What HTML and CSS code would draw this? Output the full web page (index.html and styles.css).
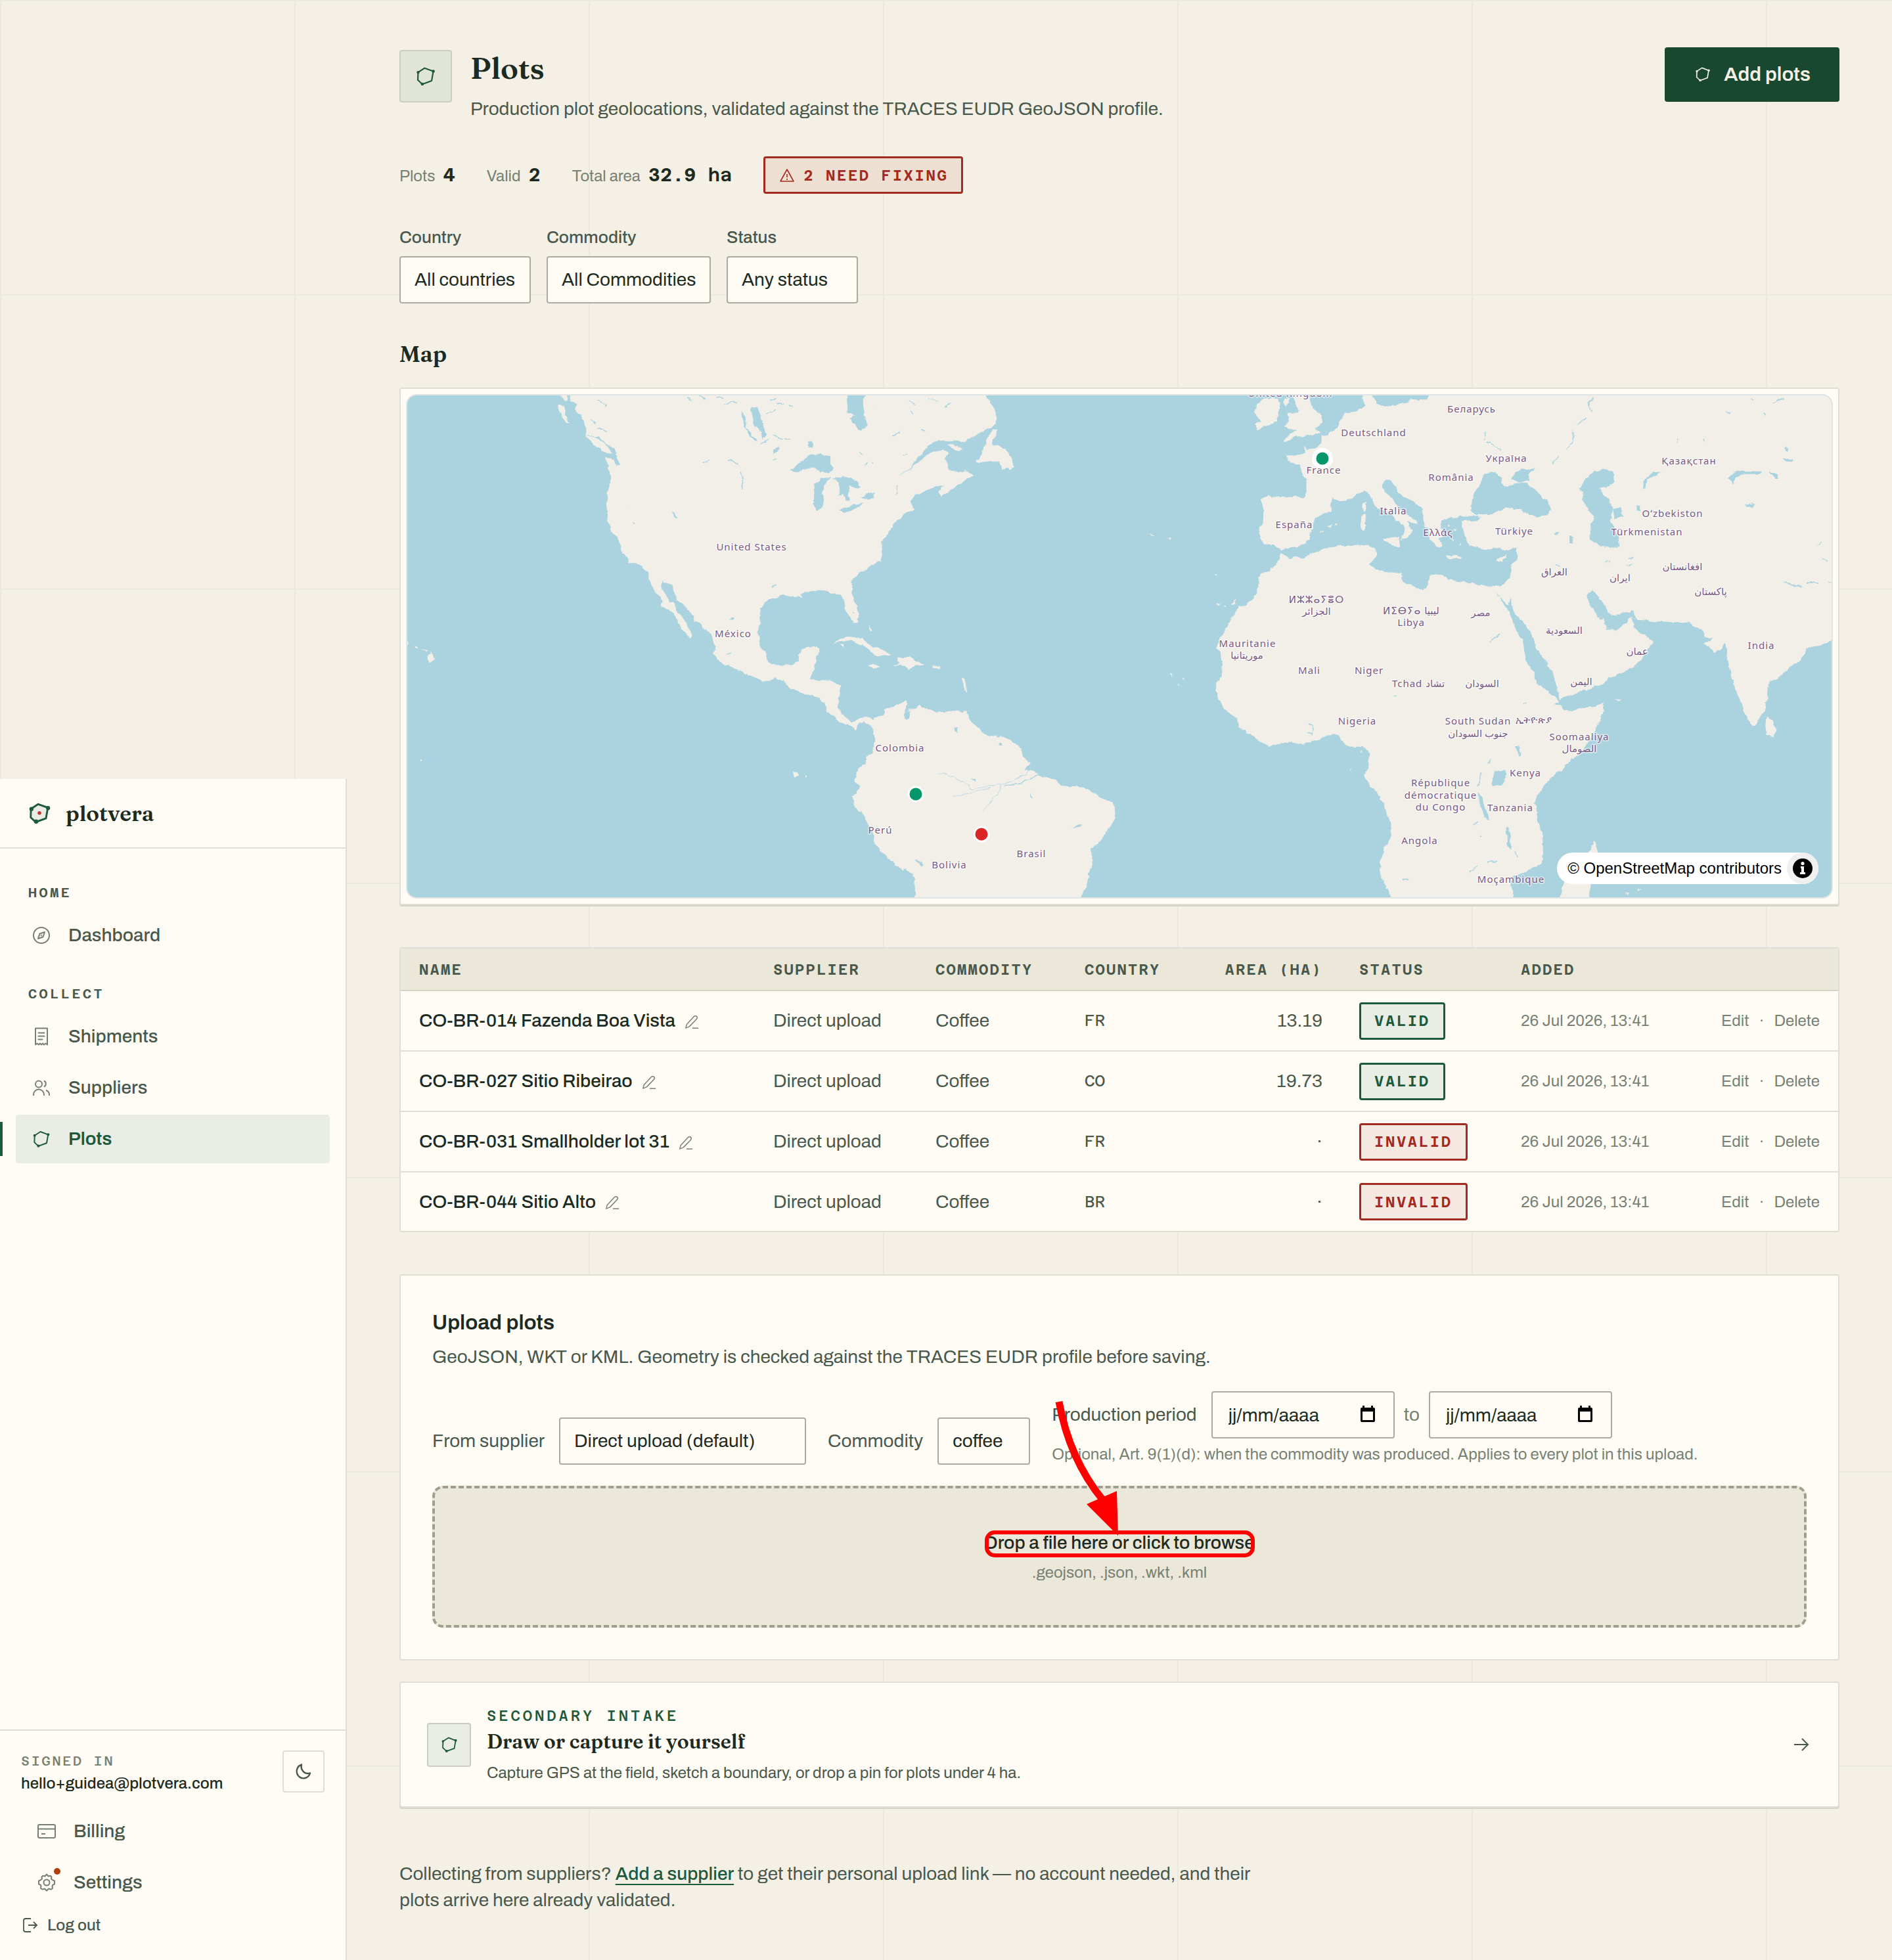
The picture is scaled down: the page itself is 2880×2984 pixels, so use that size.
FILE: index.html
```html
<!DOCTYPE html>
<html lang="en">
<head>
<meta charset="utf-8">
<title>Plots – plotvera</title>
<link rel="stylesheet" href="styles.css">
</head>
<body>
<svg class="sprite" aria-hidden="true">
  <symbol id="i-plot" viewBox="0 0 28 28">
    <path d="M12.7 4.4 23 8.2 21 19.5 10 23.5 4.7 18.5 5 9.4Z" fill="none" stroke="currentColor" stroke-width="1.7" stroke-linejoin="round"/>
    <g fill="currentColor"><circle cx="23" cy="8.2" r="1.8"/><circle cx="10" cy="23.3" r="1.8"/><circle cx="5" cy="9.4" r="1.7"/></g>
  </symbol>
  <symbol id="i-pencil" viewBox="0 0 24 24">
    <path d="M2 22 3.500 16 15.500 3C17 1.500 19.500 1.500 20.500 3S21 6 20 7L8 19.500 2 22ZM13 22h10" fill="none" stroke="currentColor" stroke-width="1.600" stroke-linejoin="round"/>
  </symbol>
  <symbol id="i-calendar" viewBox="0 0 24 26">
    <path d="M4 0h3v3h10V0h3v3h1a2 2 0 0 1 2 2v18a2 2 0 0 1-2 2H3a2 2 0 0 1-2-2V5a2 2 0 0 1 2-2h1ZM4 9v13h16V9Z" fill="#000" fill-rule="evenodd"/>
  </symbol>
</svg>

<div class="layout">
  <aside class="sidebar">
    <a class="brand" href="#">
      <svg class="brand-mark" viewBox="0 0 28 28" aria-hidden="true">
        <path d="M12.700 4.400 23 8.200 21 19.500 10 23.500 4.700 18.500 5 9.400Z" fill="#e8ece4" stroke="#1d5a3c" stroke-width="2" stroke-linejoin="round"/>
        <g fill="#1d5a3c"><circle cx="23.200" cy="8.500" r="2.200"/><circle cx="10.500" cy="23" r="2.300"/><circle cx="5.500" cy="9.600" r="2.200"/></g>
        <circle cx="14" cy="13.800" r="1.900" fill="#c0392b"/>
      </svg>
      <span>plotvera</span>
    </a>
    <nav class="nav" aria-label="Main">
      <h2 class="nav-title">HOME</h2>
      <a class="nav-link" href="#">
        <svg class="icon-nav" viewBox="0 0 32 32" aria-hidden="true"><g fill="none" stroke="currentColor" stroke-width="2" stroke-linejoin="round"><circle cx="16" cy="16" r="12"/><path d="M21 11 18.500 18.500 11 21 13.500 13.500Z"/><circle cx="16" cy="16" r="1" stroke-width="1"/></g></svg>
        Dashboard
      </a>
      <h2 class="nav-title">COLLECT</h2>
      <a class="nav-link" href="#">
        <svg class="icon-nav" viewBox="0 0 32 32" aria-hidden="true"><path d="M7 3.500h18v25l-2.500-2-2.500 2-2-2-2 2-2-2-2 2-2.500-2L7 28.500ZM11.500 10.500h9M11.500 15.500h9M11.500 20.500h6" fill="none" stroke="currentColor" stroke-width="2" stroke-linejoin="round" stroke-linecap="round"/></svg>
        Shipments
      </a>
      <a class="nav-link" href="#">
        <svg class="icon-nav" viewBox="0 0 32 32" aria-hidden="true"><path d="M4 28v-1.500a8 8 0 0 1 16 0V28M20 5.500a5 5 0 0 1 0 9M23 20a7 7 0 0 1 5 6.500V28M17 10.500a5 5 0 1 1-10 0 5 5 0 0 1 10 0Z" fill="none" stroke="currentColor" stroke-width="2"/></svg>
        Suppliers
      </a>
      <a class="nav-link is-active" href="#" aria-current="page">
        <svg class="icon-nav" aria-hidden="true"><use href="#i-plot"/></svg>
        Plots
      </a>
    </nav>
    <div class="account">
      <div class="account-user">
        <div>
          <div class="account-label">SIGNED IN</div>
          <div class="account-email">hello+guidea@plotvera.com</div>
        </div>
        <button class="theme-button" type="button" aria-label="Switch theme">
          <svg class="icon-s" viewBox="0 0 28 28" aria-hidden="true"><path d="M11 3.500C5.500 5.500 2.500 11 4 16.500c1.500 5.500 7 9 12.500 7.500 4-1 6.500-4 7.500-7.500-8 2.500-15-4.500-13-13Z" fill="none" stroke="currentColor" stroke-width="2.400" stroke-linejoin="round"/></svg>
        </button>
      </div>
      <a class="nav-link" href="#">
        <svg class="icon-nav" viewBox="0 0 32 32" aria-hidden="true"><path d="M5 6h22a2 2 0 0 1 2 2v16a2 2 0 0 1-2 2H5a2 2 0 0 1-2-2V8a2 2 0 0 1 2-2ZM3 12.500h26M8 20h6" fill="none" stroke="currentColor" stroke-width="2"/></svg>
        Billing
      </a>
      <a class="nav-link" href="#">
        <span class="icon-wrap">
          <svg class="icon-nav" viewBox="0 0 32 32" aria-hidden="true"><g fill="none" stroke="currentColor" stroke-width="2" stroke-linejoin="round"><path d="M16 3.500 18.500 6.500 22 5.800 23.500 7.500 23 10.500 25.500 12.500 28 13.500V18.500L25.500 19.500 24.500 21.500 25 25 22.500 26.500 19 25.500 16 28.500 13 25.500 9.500 26.500 7 25 7.500 21.500 6.500 19.500 4 18.500V13.500L6.500 12.500 9 10.500 8.500 7.500 10 5.800 13.500 6.500Z"/><circle cx="16" cy="16" r="4.500"/></g></svg>
          <span class="alert-dot"></span>
        </span>
        Settings
      </a>
      <button class="logout" type="button">
        <svg class="icon-s" viewBox="0 0 28 28" aria-hidden="true"><path d="M15 4H7a3 3 0 0 0-3 3v14a3 3 0 0 0 3 3h8M11 14h13M19 9l5 5-5 5" fill="none" stroke="currentColor" stroke-width="1.800"/></svg>
        Log out
      </button>
    </div>
  </aside>

  <main class="main">
    <header class="page-head">
      <span class="tile tile-l"><svg class="icon-l" aria-hidden="true"><use href="#i-plot"/></svg></span>
      <div class="page-title">
        <h1>Plots</h1>
        <p>Production plot geolocations, validated against the TRACES EUDR GeoJSON profile.</p>
      </div>
      <button class="primary" type="button"><svg class="icon-s" aria-hidden="true"><use href="#i-plot"/></svg>Add plots</button>
    </header>

    <div class="stats">
      <span class="stat">Plots <b>4</b></span>
      <span class="stat">Valid <b>2</b></span>
      <span class="stat">Total area <b>32.9 ha</b></span>
      <span class="badge badge-bad badge-wide"><svg class="icon-warn" viewBox="0 0 26 26" aria-hidden="true"><path d="M13 4 23 22H3ZM13 11v5M13 18v2" fill="none" stroke="currentColor" stroke-width="1.600" stroke-linejoin="round"/></svg>2 NEED FIXING</span>
    </div>

    <form class="filters">
      <label class="filter">Country<select class="control w-m"><option>All countries</option></select></label>
      <label class="filter">Commodity<select class="control w-l"><option>All Commodities</option></select></label>
      <label class="filter">Status<select class="control w-m"><option>Any status</option></select></label>
    </form>

    <h2 class="section-title">Map</h2>
    <div class="map-card">
      <div class="map">
        <svg class="map-canvas" viewBox="620 602 2168 764" role="img" aria-label="World map of plots">
          <defs>
            <filter id="coast" x="0" y="0" width="100%" height="100%"><feTurbulence type="fractalNoise" baseFrequency="0.09" numOctaves="3" seed="4"/><feDisplacementMap in="SourceGraphic" scale="7" xChannelSelector="R" yChannelSelector="G"/></filter>
          </defs>
          <rect x="600" y="590" width="2200" height="790" fill="#aad3df"/>
          <g filter="url(#coast)">
            <rect x="600" y="580" width="2220" height="800" fill="none"/>
            <!-- the Americas, west part -->
            <g transform="translate(600 580) scale(.4847 .5102)" fill="#f2efe9">
              <path d="M555 20 552 60 575 70 565 85 585 105 597 125 605 150 600 160 640 165 660 180 690 205 703 225 705 250 695 255 690 235 662 230 672 250 677 275 677 300 673 330 667 360 672 390 669 418 680 430 682 450 700 468 712 490 715 508 730 525 737 543 765 550 790 565 798 580 808 605 825 635 845 655 838 672 860 680 880 695 890 720 905 740 928 766 936 758 925 740 915 720 905 705 888 688 878 665 862 652 850 635 838 615 840 600 868 605 880 635 885 652 910 670 938 700 940 712 960 725 985 748 1000 765 1003 785 1010 800 1005 815 1020 835 1040 850 1070 857 1100 873 1140 888 1166 896 1200 886 1220 895 1250 922 1290 935 1325 941 1345 955 1360 975 1358 992 1385 1000 1397 1018 1425 1025 1452 1042 1458 1025 1475 1015 1490 1025 1505 1045 1508 1085 1500 1110 1480 1125 1478 1145 1458 1155 1445 1190 1462 1212 1440 1240 1445 1268 1465 1285 1485 1315 1500 1350 1525 1380 1530 1400 1568 1440 1600 1460V965L1568 975 1545 985 1538 1000 1518 1027 1500 1010 1478 1003 1440 1018 1415 1005 1393 975 1397 940 1402 908 1375 893 1330 893 1305 892 1320 860 1325 825 1338 800 1325 793 1285 797 1272 815 1270 835 1250 845 1205 852 1175 838 1165 812 1148 785 1143 745 1150 705 1150 680 1165 660 1195 648 1215 640 1250 640 1285 648 1275 635 1320 625 1350 625 1380 635 1400 638 1412 655 1415 680 1430 705 1442 722 1455 722 1459 700 1450 665 1437 635 1435 600 1460 575 1500 550 1530 535 1532 510 1530 480 1545 460 1568 430 1600 400V20Z"/>
              <path d="M514 72 532 74 540 100 551 128 535 115 520 95ZM512 30h30l5 25-12 5-8-12ZM600 162 635 168 660 185 685 215 660 212 625 190ZM1378 785 1395 768 1430 762 1470 772 1510 795 1562 815 1510 820 1490 800 1440 775 1400 775ZM1488 850 1510 846 1528 854 1510 860ZM1490 725 1503 748 1495 748ZM105 820 113 812 126 828 110 840ZM66 788l9 4-4 6ZM85 800l20 4-4 5ZM38 776l9 5-6 5ZM78 1130l8 3-3 5ZM1252 1163l14 6 6 12-16 4ZM1288 1176l8 3-5 4ZM1405 786l10 2-5 8Z"/>
              <g fill="#aad3df">
                <path d="M1245 268 1280 240 1305 220 1335 215 1365 228 1380 262 1375 272 1340 275 1320 258 1295 258 1270 270ZM1320 310 1340 290 1370 288 1352 305 1345 330 1350 360 1340 385 1325 388 1318 360ZM1375 290 1410 282 1440 290 1465 315 1450 320 1430 310 1425 335 1430 355 1418 357 1408 335 1392 345 1400 320 1390 295ZM1398 383 1440 370 1478 362 1450 380 1415 394ZM1465 350 1490 335 1527 328 1527 345 1490 350ZM1120 80 1140 75 1150 110 1168 160 1160 175 1150 150 1130 130ZM1088 88 1105 110 1108 140 1138 180 1128 178 1100 135ZM1420 20H1490L1470 60 1485 130 1465 150 1440 125 1425 95ZM1300 180l14 0 0 18-12 0ZM872 390l8 2 8 18-6 0ZM1188 205l20-10 4 10-20 12ZM1505 80l35-10 18 10-25 15Z"/>
                <path d="M920 48l14 12M960 45l18 10M1010 48l20 4M1040 70l20-8M1060 60l18 6M1180 60l20-10M1170 100l30-15M1200 65l25 4M1240 70l12 6M1150 190l25-15M1190 160l30 15M1225 172l20 5M1050 235l28 14M965 246l25-8M1090 270l8 40-6 12M738 380l4 2M748 420l6 4M1190 236l12-4M1460 215l12 4M1475 250l10-4M1500 245l10 4M1545 222l18 2M1520 120l30-8M640 55l25 22M620 115l14 12M640 140l25 10M1185 618l20-10M1053 711l14 0M1042 815l14 0M1440 690l6 2M1520 460l10 6 2 24" fill="none" stroke="#aad3df" stroke-width="3"/>
              </g>
              <path d="M1423 100l14-6 8 8-10 8Z"/>
            </g>
            <!-- the Americas, east part; western Europe and Africa -->
            <g transform="translate(1340 580) scale(.4847 .5102)" fill="#f2efe9">
              <path d="M-20 20H320L365 90 365 130 320 150 265 180 215 180 165 180 140 205 105 245 95 262 130 235 160 212 195 205 215 215 205 235 215 265 245 275 275 265 290 285 262 300 225 320 190 345 180 330 200 312 165 320 110 340 95 360 108 385 60 402 40 415 20 450 15 465 5 475 5 520-20 525ZM355 143 370 145 350 190 375 195 405 215 415 240 420 255 410 268 400 260 380 265 375 240 345 240 302 243 325 205 340 165ZM208 188 240 193 260 207 240 207ZM35 850 60 845 52 825 95 825 138 847 110 850 88 860 75 850ZM162 848H188V857H162ZM-10 798 35 817-10 820Z"/>
              <path d="M-20 1005 10 1000 15 980 45 970 80 955 88 965 75 985 90 985 105 975 125 970 160 985 200 990 240 985 270 990 275 1010 310 1035 325 1055 380 1063 410 1072 440 1095 450 1120 470 1140 455 1160 480 1165 500 1175 550 1190 570 1210 640 1213 680 1235 705 1250 727 1255 738 1285 735 1310 715 1345 680 1385 665 1390 665 1430 655 1470 650 1495 635 1530 620 1560H110L108 1490 100 1470 60 1445 20 1420 0 1400-20 1375Z"/>
              <path d="M262 985h10v8h-10ZM254 880l10 10 8 30-2 10-8-20ZM845 455l18 2-8 4ZM898 470l14 2-2 4ZM1050 576l9 1-4 4ZM1038 656l6 6M1056 662l12 4-6 6ZM1078 668l8 4-6 4ZM1104 664l14-16-6 22ZM908 872l6 4-4 2ZM935 905l6-2 0 8ZM948 886l6 4-4 2ZM1472 1158l6 2-4 6ZM1510 1102l8 2-5 8Z"/>
              <path d="M1180 70 1200 55 1245 50 1258 65 1250 90 1248 120 1215 135 1185 145 1175 130 1195 118 1178 100ZM1270 50 1285 55 1275 78 1265 65ZM1290 20 1350 50 1360 85 1388 105 1388 125 1365 140 1383 155 1340 165 1300 168 1262 183 1285 160 1310 150 1268 135 1285 120 1280 100 1315 92 1305 65Z"/>
              <path d="M1575 20H1515V50L1520 75 1500 90 1460 95 1445 115 1435 140 1400 160 1385 165 1388 185 1370 200 1340 205 1328 195 1335 215 1275 225 1280 235 1320 250 1325 275 1338 290 1338 330 1330 348 1220 343 1195 352 1203 380 1203 410 1190 455 1203 487 1235 488 1258 508 1275 497 1310 495 1345 475 1350 455 1360 440 1358 430 1365 410 1415 385 1418 350 1465 358 1500 335 1520 325 1545 345 1575 382Z"/>
              <path d="M1258 515 1285 527 1330 528 1380 505 1440 492 1490 492 1535 487 1555 495 1550 520 1558 545 1540 550 1575 572V1248L1540 1210 1518 1180 1533 1155 1535 1110 1515 1088 1465 1092 1440 1058 1410 1057 1370 1070 1325 1085 1285 1077 1220 1090 1185 1070 1130 1035 1120 1010 1080 975 1060 945 1052 912 1070 880 1073 840 1068 810 1055 795 1075 755 1100 715 1125 675 1160 660 1185 630 1185 605 1195 575 1235 558 1250 535ZM1508 402 1530 398 1532 440 1512 447ZM1515 365 1528 358 1527 392 1516 390ZM1403 433 1420 430 1412 440ZM1428 426h8v4h-8ZM1382 448h8v4h-8Z"/>
              <path d="M78 985 92 985 93 1005 82 1010 74 998ZM232 1034 244 1034 240 1048 234 1046ZM470 1228 482 1245 474 1244ZM284 1186 300 1190 298 1198ZM112 1425 134 1442 130 1448 114 1436ZM600 1336 630 1322 628 1330ZM373 1080h8v8h-8Z" fill="#aad3df"/>
              <path d="M40 165l20-14M70 220l12-4M95 90l10 8M128 145l14 4M50 310l3 25M205 75l18-10M90 60l20 10M1345 1020l15 15-2 18-14-4M390 1206Q430 1208 460 1192L500 1172" fill="none" stroke="#aad3df" stroke-width="3"/>
              <path d="M280 1218Q340 1212 380 1203T450 1175L468 1158M282 1216Q250 1180 180 1170M380 1205Q370 1240 318 1284M345 1215Q280 1230 228 1240M58 282q40-20 60-45M150 55l30 4" fill="none" stroke="#aad3df" stroke-width="2" opacity=".7"/>
            </g>
            <!-- eastern Europe, Africa and Asia -->
            <g transform="translate(2080 580) scale(.4719 .5102)" fill="#f2efe9">
              <path d="M10 20H1560V765L1503 772 1480 785 1420 795 1418 810 1395 835 1370 850 1340 880 1300 898 1295 930 1290 965 1285 990 1270 1005 1262 1018 1245 1028 1228 1010 1210 965 1190 920 1175 870 1165 830 1158 800 1155 780 1145 800 1125 808 1090 785 1115 770 1095 765 1085 745 1060 735 1045 720 1000 722 950 720 870 712 858 702 862 735 890 755 922 778 905 810 885 830 865 850 830 870 785 885 760 905 700 925 640 945 622 950 608 967 625 965 640 985 680 980 735 970 765 962 762 990 745 1030 715 1080 680 1120 640 1150 600 1180 570 1210 550 1240 540 1260 552 1290 550 1310 568 1350 570 1420 560 1440 500 1470 470 1480 465 1500 480 1560H85L60 1500 42 1470 45 1430 60 1390 80 1360 80 1335 65 1290 60 1270 45 1240 20 1215 10 1205Z"/>
              <path d="M1290 1003 1310 1012 1325 1045 1312 1063 1290 1058 1287 1025ZM805 950H822L815 956ZM640 1490 615 1560H712L745 1405 735 1370 720 1400 700 1420ZM838 1528l10 4-6 4ZM876 1514l10 4-6 4Z"/>
              <g fill="#aad3df">
                <path d="M0 328 15 345 35 380 75 395 105 420 122 440 118 460 110 475 130 468 150 448 138 430 134 418 165 425 160 415 130 400 105 380 85 350 60 330 50 310 60 295 78 295 85 310 120 345 150 360 180 380 185 425 200 450 205 475 235 500 245 490 235 470 250 465 240 430 245 415 265 408 310 405 350 403 368 406 355 414 310 418 310 440 320 470 330 490 370 500 400 505 430 495 450 505 488 495 485 530 470 550 462 590 445 608 400 615 360 605 270 595 240 575 205 580 195 615 180 625 120 600 110 575 40 565 12 550 32 510 10 490-5 480Z"/>
                <path d="M345 360 345 340 365 310 375 290 385 275 415 272 440 290 430 305 450 315 480 305 520 305 550 330 585 360 592 380 585 400 545 405 500 385 470 378 430 385 400 400 350 400 335 385ZM462 295 480 270 545 258 520 280 525 295 495 303ZM798 268 765 262 740 268 720 280 685 318 700 335 700 360 735 410 722 430 722 475 745 490 785 498 817 492 808 450 790 420 795 375 775 350 748 320 775 318 800 300ZM795 380 815 376 830 400 800 412ZM892 322 894 300 908 285 930 272 952 272 930 284 908 292 898 322ZM1168 285 1195 268 1275 270 1270 278 1210 278 1188 290 1182 308ZM872 374h12v14h-12ZM1222 368 1258 364 1245 375 1228 376ZM1300 270l25 6 6 14-12 0ZM1345 228l30 10-5 6-22-8ZM1350 195l14 4-6 12Z"/>
                <path d="M708 640 730 625 745 642 765 660 780 690 800 700 845 690 860 686 876 714 858 702 830 727 810 742 775 745 768 722 760 705 755 715 740 700 720 665ZM418 628 435 655 455 680 480 740 500 770 515 830 540 870 550 900 600 940 625 958 610 900 600 865 570 825 545 795 540 770 520 735 490 705 468 670 466 645 458 668 435 650 425 635ZM5 20H215L195 58 150 55 125 64 60 74 30 65ZM410 1165 450 1160 450 1185 430 1210 408 1205ZM358 1228 372 1240 397 1310 378 1300ZM450 1330 460 1335 468 1400 455 1390ZM385 1140 402 1130 398 1142ZM484 1090l6 0 8 30-6 0ZM655 462l10 4 0 20-10-4ZM605 455l18-4-4 8ZM118 1485h18v5h-18Z"/>
                <path d="M730 50l-14 20 10 25M710 110l-30 20M668 145l-6 40-14 20M620 225l-20 22M385 155v20M390 180l45 30M610 548l14 6M845 528h18M770 540l14 0M840 550l12 0M398 780l32-25M370 1168l-8 40M330 1468l26-20M390 1435l32-2M345 1325l12-10M372 1355l-4 4M1310 70l35-20M1240 50l10 8M1090 170v8M1000 185l2-14M1345 600l60 14M1420 600l40 4M1450 490l20-10M1470 530l20 8M1490 600l20-4M1160 90l14 6M1280 95l4 10M90 942h8M505 960l10 2M480 1405l4 20" fill="none" stroke="#aad3df" stroke-width="3"/>
              </g>
              <path d="M55 472 105 466 104 496 85 490 62 480ZM256 520 308 525 305 532 262 530ZM418 532 452 520 440 538 425 542ZM262 430l8 3-5 5ZM285 440l8 4-6 5ZM275 470l7 4-6 4ZM300 480l7 5-7 5Z"/>
            </g>
          </g>
          <g class="map-labels">
            <text x="1144" y="838">United States</text><text x="1116" y="970">México</text>
            <text x="1370" y="1144">Colombia</text><text x="1340" y="1269">Perú</text>
            <text x="1570" y="1305">Brasil</text><text x="1445" y="1322">Bolivia</text>
            <text x="1964" y="604">United Kingdom</text><text x="2091" y="664">Deutschland</text>
            <text x="2015" y="721">France</text><text x="1970" y="804">España</text>
            <text x="2004" y="918">ⵍⵣⵣⴰⵢⴻⵔ</text><text x="2004" y="936">الجزائر</text>
            <text x="1899" y="985">Mauritanie</text><text x="1898" y="1003">موريتانيا</text>
            <text x="1993" y="1026">Mali</text><text x="2084" y="1026">Niger</text><text x="2066" y="1103">Nigeria</text>
            <text x="2240" y="628">Беларусь</text><text x="2293" y="703">Україна</text>
            <text x="2209" y="732">România</text><text x="2571" y="707">Қазақстан</text>
            <text x="2121" y="783">Italia</text><text x="2189" y="816">Ελλάς</text>
            <text x="2305" y="814">Türkiye</text><text x="2546" y="787">Oʻzbekiston</text>
            <text x="2507" y="815">Türkmenistan</text><text x="2366" y="876">العراق</text>
            <text x="2466" y="885">ایران</text><text x="2561" y="868">افغانستان</text>
            <text x="2604" y="906">پاکستان</text><text x="2148" y="935">ⵍⵉⴱⵢⴰ ليبيا</text>
            <text x="2148" y="953">Libya</text><text x="2254" y="938">مصر</text>
            <text x="2381" y="965">السعودية</text><text x="2492" y="997">عمان</text>
            <text x="2681" y="988">India</text><text x="2159" y="1046">Tchad تشاد</text>
            <text x="2256" y="1046">السودان</text><text x="2407" y="1043">اليمن</text>
            <text x="2250" y="1103">South Sudan</text><text x="2250" y="1122">جنوب السودان</text>
            <text x="2335" y="1101">ኢትዮጵያ</text><text x="2404" y="1127">Soomaaliya</text>
            <text x="2404" y="1145">الصومال</text><text x="2322" y="1182">Kenya</text>
            <text x="2193" y="1197">République</text><text x="2193" y="1216">démocratique</text>
            <text x="2193" y="1234">du Congo</text><text x="2299" y="1235">Tanzania</text>
            <text x="2161" y="1285">Angola</text><text x="2300" y="1344">Moçambique</text>
          </g>
          <circle cx="2013" cy="698" r="16" fill="#fff"/>
          <g stroke="#fff" stroke-width="3">
            <circle cx="2013" cy="698" r="11" fill="#059669"/>
            <circle cx="1394" cy="1209" r="11" fill="#059669"/>
            <circle cx="1494" cy="1270" r="11" fill="#dc2626"/>
          </g>
        </svg>
        <div class="attribution">
          <a href="#">© OpenStreetMap contributors</a>
          <button class="info" type="button" aria-label="Toggle attribution"><svg viewBox="0 0 48 48" aria-hidden="true"><circle cx="24" cy="24" r="15"/><path d="M24 14a2.600 2.600 0 1 1 0 5.200 2.600 2.600 0 0 1 0-5.200ZM21 21h5v9h2v3h-8v-3h2v-6h-1Z" fill="#fff"/></svg></button>
        </div>
      </div>
    </div>

    <div class="table-card">
      <table class="plots">
        <colgroup><col><col class="c-supplier"><col class="c-commodity"><col class="c-country"><col class="c-area"><col class="c-status"><col class="c-added"><col class="c-actions"></colgroup>
        <thead>
          <tr><th>NAME</th><th>SUPPLIER</th><th>COMMODITY</th><th>COUNTRY</th><th class="num">AREA (HA)</th><th>STATUS</th><th>ADDED</th><th></th></tr>
        </thead>
        <tbody>
          <tr>
            <td class="name">CO-BR-014 Fazenda Boa Vista<button class="edit" type="button" aria-label="Rename"><svg class="icon-edit"><use href="#i-pencil"/></svg></button></td>
            <td>Direct upload</td><td>Coffee</td><td class="code">FR</td><td class="num">13.19</td><td><span class="badge badge-good">VALID</span></td><td class="small">26 Jul 2026, 13:41</td>
            <td class="small actions"><a href="#">Edit</a><span>·</span><a href="#">Delete</a></td>
          </tr>
          <tr>
            <td class="name">CO-BR-027 Sitio Ribeirao<button class="edit" type="button" aria-label="Rename"><svg class="icon-edit"><use href="#i-pencil"/></svg></button></td>
            <td>Direct upload</td><td>Coffee</td><td class="code">CO</td><td class="num">19.73</td><td><span class="badge badge-good">VALID</span></td><td class="small">26 Jul 2026, 13:41</td>
            <td class="small actions"><a href="#">Edit</a><span>·</span><a href="#">Delete</a></td>
          </tr>
          <tr>
            <td class="name">CO-BR-031 Smallholder lot 31<button class="edit" type="button" aria-label="Rename"><svg class="icon-edit"><use href="#i-pencil"/></svg></button></td>
            <td>Direct upload</td><td>Coffee</td><td class="code">FR</td><td class="num">·</td><td><span class="badge badge-bad">INVALID</span></td><td class="small">26 Jul 2026, 13:41</td>
            <td class="small actions"><a href="#">Edit</a><span>·</span><a href="#">Delete</a></td>
          </tr>
          <tr>
            <td class="name">CO-BR-044 Sitio Alto<button class="edit" type="button" aria-label="Rename"><svg class="icon-edit"><use href="#i-pencil"/></svg></button></td>
            <td>Direct upload</td><td>Coffee</td><td class="code">BR</td><td class="num">·</td><td><span class="badge badge-bad">INVALID</span></td><td class="small">26 Jul 2026, 13:41</td>
            <td class="small actions"><a href="#">Edit</a><span>·</span><a href="#">Delete</a></td>
          </tr>
        </tbody>
      </table>
    </div>

    <section class="upload">
      <h3>Upload plots</h3>
      <p class="upload-note">GeoJSON, WKT or KML. Geometry is checked against the TRACES EUDR profile before saving.</p>
      <form class="upload-form">
        <label class="field">From supplier<select class="control w-xl"><option>Direct upload (default)</option></select></label>
        <label class="field">Commodity<select class="control w-s"><option>coffee</option></select></label>
        <div class="period">
          <div class="period-row">
            <label for="from">Production period</label>
            <span class="date"><input class="control" id="from" type="text" value="jj/mm/aaaa"><svg class="icon-cal" aria-hidden="true"><use href="#i-calendar"/></svg></span>
            <label class="to" for="until">to</label>
            <span class="date"><input class="control" id="until" type="text" value="jj/mm/aaaa"><svg class="icon-cal" aria-hidden="true"><use href="#i-calendar"/></svg></span>
          </div>
          <p class="hint">Optional, Art. 9(1)(d): when the commodity was produced. Applies to every plot in this upload.</p>
        </div>
      </form>
      <button class="drop" type="button">
        <span class="drop-label">Drop a file here or click to browse
          <svg class="callout" viewBox="1490 2125 428 250" aria-hidden="true">
            <rect x="1502" y="2333" width="405" height="35" rx="12" fill="none" stroke="#f00" stroke-width="6"/>
            <path d="M1612 2134Q1628 2222 1679 2284" fill="none" stroke="#f00" stroke-width="11"/>
            <path d="M1702 2338 1654 2290 1700 2270Z" fill="#f00"/>
          </svg>
        </span>
        <span class="drop-hint">.geojson, .json, .wkt, .kml</span>
      </button>
    </section>

    <a class="secondary" href="#">
      <span class="tile tile-m"><svg class="icon-m" aria-hidden="true"><use href="#i-plot"/></svg></span>
      <span class="secondary-text">
        <span class="eyebrow">SECONDARY INTAKE</span>
        <span class="secondary-title">Draw or capture it yourself</span>
        <span class="secondary-note">Capture GPS at the field, sketch a boundary, or drop a pin for plots under 4 ha.</span>
      </span>
      <svg class="icon-arrow" viewBox="0 0 28 28" aria-hidden="true"><path d="M1 14h21M13 5l9 9-9 9" fill="none" stroke="currentColor" stroke-width="2"/></svg>
    </a>

    <p class="outro">Collecting from suppliers? <a href="#">Add a supplier</a> to get their personal upload link — no account needed, and their plots arrive here already validated.</p>
  </main>
</div>
</body>
</html>
```
FILE: styles.css
```css
:root {
  --paper: #f4f0e5;
  --card: #fffcf5;
  --band: #ece8d9;
  --line: #deddd6;
  --grid: #ebe8dd;
  --ink: #1c2a21;
  --soft: #4a584c;
  --faint: #778173;
  --green: #1d5a3c;
  --red: #a32a20;
  --sans: Archivo, "Liberation Sans", Arial, sans-serif;
  --serif: Fraunces, "Liberation Serif", "Times New Roman", serif;
  --mono: "Azeret Mono", "Liberation Mono", "Courier New", monospace;
}

* { box-sizing: border-box; }

body {
  margin: 0;
  color: var(--soft);
  font: 28px/40px var(--sans);
  background-color: var(--paper);
  background-image:
    linear-gradient(to right, var(--grid) 2px, transparent 2px),
    linear-gradient(to bottom, var(--grid) 2px, transparent 2px);
  background-size: 448px 448px;
}

h1, h2, h3, p { margin: 0; }
a { color: inherit; text-decoration: none; }
svg { display: block; flex: none; }
button, input, select { font: inherit; color: inherit; }
button { border: 0; padding: 0; background: none; }
.sprite { display: none; }

.layout {
  display: grid;
  grid-template-columns: 528px minmax(0, 1fr);
}

/* sidebar */
.sidebar {
  align-self: end;
  display: flex;
  flex-direction: column;
  min-height: 1799px;
  background: var(--card);
  border-right: 2px solid var(--line);
}
.brand {
  display: flex;
  align-items: center;
  gap: 20px;
  height: 106px;
  padding-left: 40px;
  border-bottom: 2px solid var(--line);
  color: var(--ink);
  font: 600 33px/48px var(--serif);
}
.brand-mark { width: 40px; height: 40px; }
.nav { padding: 53px 24px 0; }
.nav-title {
  margin: 0 0 14px 19px;
  font: 600 20px/28px var(--mono);
  letter-spacing: 0.18em;
}
.nav-link + .nav-title { margin-top: 38px; }
.nav-link {
  position: relative;
  display: flex;
  align-items: center;
  gap: 25px;
  height: 74px;
  padding-left: 23px;
  border-radius: 4px;
  font-weight: 500;
}
.nav-link + .nav-link { margin-top: 4px; }
.icon-nav { width: 32px; height: 32px; color: var(--faint); }
.is-active { background: #e9ede6; color: var(--green); font-weight: 600; }
.is-active .icon-nav { color: var(--green); }
.is-active::before {
  content: "";
  position: absolute;
  left: -24px;
  top: 11px;
  width: 4px;
  height: 52px;
  background: var(--green);
}
.account {
  margin-top: auto;
  padding: 28px 32px 30px;
  border-top: 2px solid var(--line);
}
.account-user {
  display: flex;
  justify-content: space-between;
  align-items: center;
  margin-bottom: 20px;
}
.account-label {
  color: var(--faint);
  font: 500 20px/36px var(--mono);
  letter-spacing: 0.14em;
}
.account-email { color: var(--ink); font-size: 24px; font-weight: 500; line-height: 32px; }
.theme-button {
  display: grid;
  place-items: center;
  width: 64px;
  height: 64px;
  border: 2px solid var(--line);
  border-radius: 4px;
}
.icon-s { width: 28px; height: 28px; }
.icon-wrap { position: relative; }
.alert-dot {
  position: absolute;
  top: -6px;
  right: -5px;
  width: 10px;
  height: 10px;
  border-radius: 50%;
  background: #b23c0e;
}
.logout {
  display: flex;
  align-items: center;
  gap: 12px;
  height: 48px;
  margin-top: 4px;
  font-size: 24px;
  font-weight: 500;
}

/* page header */
.main { padding: 72px 80px; }
.page-head { display: flex; align-items: flex-start; }
.tile {
  display: grid;
  place-items: center;
  flex: none;
  border: 2px solid #c9cdc0;
  border-radius: 4px;
  background: #e1e5d9;
  color: var(--green);
}
.tile-l { width: 80px; height: 80px; margin: 4px 28px 0 0; }
.tile-m { width: 67px; height: 67px; background: #e9ede6; }
.icon-l { width: 36px; height: 36px; }
.icon-m { width: 30px; height: 30px; }
.page-title { flex: 1; }
h1 { color: var(--ink); font: 600 45px/64px var(--serif); }
.page-title p { margin-top: 8px; line-height: 44px; }
.primary {
  display: flex;
  align-items: center;
  gap: 18px;
  height: 83px;
  padding: 0 44px 2px;
  border-radius: 4px;
  background: #18482f;
  color: #f4f0e6;
  font-size: 30px;
  font-weight: 600;
}

/* statistics */
.stats {
  display: flex;
  align-items: center;
  gap: 48px;
  margin-top: 50px;
}
.stat { display: flex; align-items: baseline; gap: 12px; color: var(--faint); font-size: 24px; }
.stat b { color: var(--ink); font: 600 28px/40px var(--mono); }
.badge {
  display: inline-flex;
  align-items: center;
  height: 57px;
  padding: 0 20px;
  border: 3px solid;
  border-radius: 4px;
  font: 600 22px/32px var(--mono);
  letter-spacing: 0.12em;
  vertical-align: middle;
}
.badge-good { color: var(--green); background: #e8ede6; }
.badge-bad { color: var(--red); background: #f5e8e1; }
.badge-wide { gap: 12px; background: #eedfd3; }
.icon-warn { width: 26px; height: 26px; }

/* form controls */
.filters { display: flex; gap: 24px; margin-top: 49px; }
.filter { display: flex; flex-direction: column; gap: 12px; font-size: 26px; font-weight: 500; line-height: 34px; }
.control {
  appearance: none;
  height: 72px;
  margin: 0;
  padding: 0 21px;
  border: 2px solid #a9aaa2;
  border-radius: 4px;
  outline: 0;
  background: var(--card);
  color: var(--ink);
  font-size: 28px;
  font-weight: 400;
}
.w-s { width: 141px; }
.w-m { width: 200px; }
.w-l { width: 250px; }
.w-xl { width: 376px; }

/* map */
.section-title { margin: 54px 0 28px; color: var(--ink); font: 600 34px/46px var(--serif); }
.map-card {
  padding: 8px;
  border: 2px solid var(--line);
  border-radius: 4px;
  background: var(--card);
  box-shadow: 0 2px 0 #d5d3c8;
}
.map {
  position: relative;
  overflow: hidden;
  border: 2px solid #dfe4e4;
  border-radius: 16px;
}
.map-canvas { width: 100%; height: auto; }
.map-labels {
  font: 15px "Noto Sans", "DejaVu Sans", sans-serif;
  letter-spacing: 1px;
  text-anchor: middle;
  fill: #7a5a84;
  stroke: #fff;
  stroke-width: 3px;
  stroke-opacity: 0.6;
  stroke-linejoin: round;
  paint-order: stroke;
}
.attribution {
  position: absolute;
  right: 20px;
  bottom: 20px;
  display: flex;
  align-items: center;
  gap: 8px;
  padding-left: 16px;
  border-radius: 24px;
  background: #fff;
  color: #000;
  font: 24px/32px "Liberation Sans", Arial, sans-serif;
}
.info { width: 48px; height: 48px; border-radius: 50%; background: #f0f0f0; }

/* table */
.table-card {
  margin-top: 64px;
  overflow: hidden;
  border: 2px solid var(--line);
  border-radius: 4px;
  background: var(--card);
}
.plots { width: 100%; table-layout: fixed; border-collapse: separate; border-spacing: 0; }
.c-supplier { width: 247px; }
.c-commodity { width: 227px; }
.c-country { width: 204px; }
.c-area { width: 214px; }
.c-status { width: 246px; }
.c-added { width: 285px; }
.c-actions { width: 226px; }
.plots th {
  height: 65px;
  padding: 0 28px;
  border-bottom: 2px solid #d6d3c3;
  background: var(--band);
  font: 600 22px/32px var(--mono);
  letter-spacing: 0.1em;
  text-align: left;
}
.plots td { height: 92px; padding: 0 28px; border-bottom: 2px solid var(--line); white-space: nowrap; }
.plots tr:last-child td { height: 89px; border-bottom: 0; }
.plots .num { text-align: right; }
.plots .name { color: var(--ink); font-weight: 500; }
.plots .code { font-family: var(--mono); font-size: 24px; }
.plots .small { color: var(--faint); font-size: 24px; }
.plots .actions { text-align: right; }
.actions span { margin: 0 15px; }
.edit { margin-left: 14px; color: var(--faint); vertical-align: middle; }
.icon-edit { width: 22px; height: 22px; }

/* upload */
.upload {
  margin-top: 64px;
  padding: 48px;
  border: 2px solid var(--line);
  border-radius: 4px;
  background: var(--card);
}
.upload h3 { color: var(--ink); font-size: 32px; font-weight: 600; line-height: 48px; }
.upload-note { margin-top: 6px; line-height: 44px; }
.upload-form { display: flex; align-items: flex-end; gap: 33px; margin-top: 30px; }
.field { display: flex; align-items: center; gap: 22px; }
.period-row { display: flex; align-items: center; }
.period-row .date { margin-left: 22px; }
.period-row .to { margin-left: 14px; color: var(--faint); }
.period-row .to + .date { margin-left: 14px; }
.date { position: relative; }
.date .control { display: block; width: 279px; padding-left: 24px; }
.icon-cal { position: absolute; right: 29px; top: 22px; width: 24px; height: 26px; }
.hint { margin-top: 8px; color: var(--faint); font-size: 24px; line-height: 32px; }
.drop {
  display: flex;
  flex-direction: column;
  align-items: center;
  gap: 6px;
  width: 100%;
  margin-top: 32px;
  padding: 62px 0;
  border: 4px dashed #9d9f8f;
  border-radius: 16px;
  background: var(--band);
}
.drop-label { position: relative; color: var(--ink); font-weight: 500; line-height: 42px; }
.drop-hint { color: var(--faint); font-size: 24px; line-height: 36px; }
.callout {
  position: absolute;
  left: calc(50% - 214px);
  bottom: -5px;
  width: 428px;
  height: 250px;
}

/* secondary intake */
.secondary {
  display: flex;
  align-items: center;
  gap: 24px;
  margin-top: 32px;
  padding: 34px 40px;
  border: 2px solid var(--line);
  border-radius: 4px;
  background: var(--card);
  box-shadow: 0 2px 0 #d5d3c8;
}
.secondary-text { display: flex; flex: 1; flex-direction: column; }
.eyebrow { color: var(--green); font: 500 22px/32px var(--mono); letter-spacing: 0.18em; }
.secondary-title { margin: 4px 0 10px; color: var(--ink); font: 600 30px/40px var(--serif); }
.secondary-note { font-size: 24px; line-height: 34px; }
.icon-arrow { width: 28px; height: 28px; }

.outro { max-width: 1320px; margin-top: 81px; }
.outro a {
  color: var(--green);
  font-weight: 500;
  text-decoration: underline;
  text-decoration-thickness: 2px;
  text-underline-offset: 6px;
}
```
